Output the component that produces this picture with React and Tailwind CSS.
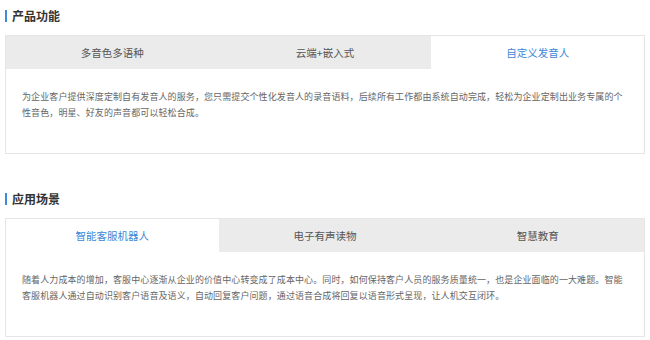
const sections = [
  {
    title: "产品功能",
    tabs: ["多音色多语种", "云端+嵌入式", "自定义发音人"],
    active: 2,
    text: "为企业客户提供深度定制自有发音人的服务，您只需提交个性化发音人的录音语料，后续所有工作都由系统自动完成，轻松为企业定制出业务专属的个性音色，明星、好友的声音都可以轻松合成。",
  },
  {
    title: "应用场景",
    tabs: ["智能客服机器人", "电子有声读物", "智慧教育"],
    active: 0,
    text: "随着人力成本的增加，客服中心逐渐从企业的价值中心转变成了成本中心。同时，如何保持客户人员的服务质量统一，也是企业面临的一大难题。智能客服机器人通过自动识别客户语音及语义，自动回复客户问题，通过语音合成将回复以语音形式呈现，让人机交互闭环。",
  },
];

function Section({ title, tabs, active, text }) {
  return (
    <div>
      <h2 className="flex items-center h-5 text-[12px] font-bold text-[#333]">
        <span className="w-[2px] h-3 bg-[#3d8ad8] mr-[5px]"></span>
        {title}
      </h2>
      <div className="mt-[9px] border border-[#e6e6e6]">
        <div className="grid grid-cols-3 h-[33px]">
          {tabs.map((tab, i) => (
            <div
              key={tab}
              className={
                i === active
                  ? "flex items-center justify-center bg-white text-[#3d86d6] text-[10.5px]"
                  : "flex items-center justify-center bg-[#ebebeb] text-[#555] text-[10.5px]"
              }
            >
              {tab}
            </div>
          ))}
        </div>
        <div className="px-4 pt-5 pb-8 text-[9px] tracking-[0.1px] leading-4 text-[#666]">
          {text}
        </div>
      </div>
    </div>
  );
}

export default function App() {
  return (
    <div className="w-[650px] h-[340px] bg-white px-[5px] pt-[6px] font-['Noto_Sans_CJK_SC','Noto_Sans',sans-serif]">
      <Section {...sections[0]} />
      <div className="mt-[35px]">
        <Section {...sections[1]} />
      </div>
    </div>
  );
}
